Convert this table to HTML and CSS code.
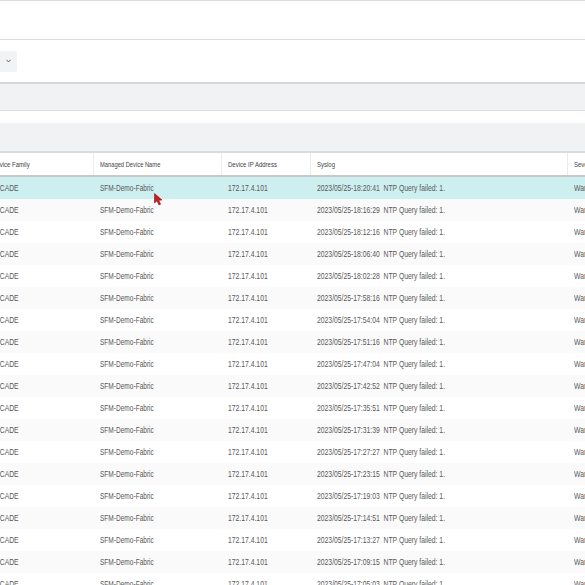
FILE: index.html
```html
<!DOCTYPE html>
<html>
<head>
<meta charset="utf-8">
<link rel="stylesheet" href="styles.css">
</head>
<body>
<div class="page">
  <div class="topbar"></div>
  <div class="toolbar">
    <div class="select-end">
      <svg width="5" height="4" viewBox="0 0 5 4"><path d="M0.5 0.8 L2.5 3 L4.5 0.8" fill="none" stroke="#666" stroke-width="1"/></svg>
    </div>
  </div>
  <div class="band band-1"></div>
  <div class="band band-2"></div>
  <div class="grid">
    <div class="row head">
      <div class="c c1"><span class="t">Device Family</span></div>
      <div class="c c2"><span class="t">Managed Device Name</span></div>
      <div class="c c3"><span class="t">Device IP Address</span></div>
      <div class="c c4"><span class="t">Syslog</span></div>
      <div class="c c5"><span class="t">Severity</span></div>
    </div>
    <div class="row sel"><div class="c c1"><span class="t">BROCADE</span></div><div class="c c2"><span class="t">SFM-Demo-Fabric</span></div><div class="c c3"><span class="t">172.17.4.101</span></div><div class="c c4"><span class="t">2023/05/25-18:20:41&nbsp; NTP Query failed: 1.</span></div><div class="c c5"><span class="t">Warning</span></div></div>
    <div class="row"><div class="c c1"><span class="t">BROCADE</span></div><div class="c c2"><span class="t">SFM-Demo-Fabric</span></div><div class="c c3"><span class="t">172.17.4.101</span></div><div class="c c4"><span class="t">2023/05/25-18:16:29&nbsp; NTP Query failed: 1.</span></div><div class="c c5"><span class="t">Warning</span></div></div>
    <div class="row"><div class="c c1"><span class="t">BROCADE</span></div><div class="c c2"><span class="t">SFM-Demo-Fabric</span></div><div class="c c3"><span class="t">172.17.4.101</span></div><div class="c c4"><span class="t">2023/05/25-18:12:16&nbsp; NTP Query failed: 1.</span></div><div class="c c5"><span class="t">Warning</span></div></div>
    <div class="row"><div class="c c1"><span class="t">BROCADE</span></div><div class="c c2"><span class="t">SFM-Demo-Fabric</span></div><div class="c c3"><span class="t">172.17.4.101</span></div><div class="c c4"><span class="t">2023/05/25-18:06:40&nbsp; NTP Query failed: 1.</span></div><div class="c c5"><span class="t">Warning</span></div></div>
    <div class="row"><div class="c c1"><span class="t">BROCADE</span></div><div class="c c2"><span class="t">SFM-Demo-Fabric</span></div><div class="c c3"><span class="t">172.17.4.101</span></div><div class="c c4"><span class="t">2023/05/25-18:02:28&nbsp; NTP Query failed: 1.</span></div><div class="c c5"><span class="t">Warning</span></div></div>
    <div class="row"><div class="c c1"><span class="t">BROCADE</span></div><div class="c c2"><span class="t">SFM-Demo-Fabric</span></div><div class="c c3"><span class="t">172.17.4.101</span></div><div class="c c4"><span class="t">2023/05/25-17:58:16&nbsp; NTP Query failed: 1.</span></div><div class="c c5"><span class="t">Warning</span></div></div>
    <div class="row"><div class="c c1"><span class="t">BROCADE</span></div><div class="c c2"><span class="t">SFM-Demo-Fabric</span></div><div class="c c3"><span class="t">172.17.4.101</span></div><div class="c c4"><span class="t">2023/05/25-17:54:04&nbsp; NTP Query failed: 1.</span></div><div class="c c5"><span class="t">Warning</span></div></div>
    <div class="row"><div class="c c1"><span class="t">BROCADE</span></div><div class="c c2"><span class="t">SFM-Demo-Fabric</span></div><div class="c c3"><span class="t">172.17.4.101</span></div><div class="c c4"><span class="t">2023/05/25-17:51:16&nbsp; NTP Query failed: 1.</span></div><div class="c c5"><span class="t">Warning</span></div></div>
    <div class="row"><div class="c c1"><span class="t">BROCADE</span></div><div class="c c2"><span class="t">SFM-Demo-Fabric</span></div><div class="c c3"><span class="t">172.17.4.101</span></div><div class="c c4"><span class="t">2023/05/25-17:47:04&nbsp; NTP Query failed: 1.</span></div><div class="c c5"><span class="t">Warning</span></div></div>
    <div class="row"><div class="c c1"><span class="t">BROCADE</span></div><div class="c c2"><span class="t">SFM-Demo-Fabric</span></div><div class="c c3"><span class="t">172.17.4.101</span></div><div class="c c4"><span class="t">2023/05/25-17:42:52&nbsp; NTP Query failed: 1.</span></div><div class="c c5"><span class="t">Warning</span></div></div>
    <div class="row"><div class="c c1"><span class="t">BROCADE</span></div><div class="c c2"><span class="t">SFM-Demo-Fabric</span></div><div class="c c3"><span class="t">172.17.4.101</span></div><div class="c c4"><span class="t">2023/05/25-17:35:51&nbsp; NTP Query failed: 1.</span></div><div class="c c5"><span class="t">Warning</span></div></div>
    <div class="row"><div class="c c1"><span class="t">BROCADE</span></div><div class="c c2"><span class="t">SFM-Demo-Fabric</span></div><div class="c c3"><span class="t">172.17.4.101</span></div><div class="c c4"><span class="t">2023/05/25-17:31:39&nbsp; NTP Query failed: 1.</span></div><div class="c c5"><span class="t">Warning</span></div></div>
    <div class="row"><div class="c c1"><span class="t">BROCADE</span></div><div class="c c2"><span class="t">SFM-Demo-Fabric</span></div><div class="c c3"><span class="t">172.17.4.101</span></div><div class="c c4"><span class="t">2023/05/25-17:27:27&nbsp; NTP Query failed: 1.</span></div><div class="c c5"><span class="t">Warning</span></div></div>
    <div class="row"><div class="c c1"><span class="t">BROCADE</span></div><div class="c c2"><span class="t">SFM-Demo-Fabric</span></div><div class="c c3"><span class="t">172.17.4.101</span></div><div class="c c4"><span class="t">2023/05/25-17:23:15&nbsp; NTP Query failed: 1.</span></div><div class="c c5"><span class="t">Warning</span></div></div>
    <div class="row"><div class="c c1"><span class="t">BROCADE</span></div><div class="c c2"><span class="t">SFM-Demo-Fabric</span></div><div class="c c3"><span class="t">172.17.4.101</span></div><div class="c c4"><span class="t">2023/05/25-17:19:03&nbsp; NTP Query failed: 1.</span></div><div class="c c5"><span class="t">Warning</span></div></div>
    <div class="row"><div class="c c1"><span class="t">BROCADE</span></div><div class="c c2"><span class="t">SFM-Demo-Fabric</span></div><div class="c c3"><span class="t">172.17.4.101</span></div><div class="c c4"><span class="t">2023/05/25-17:14:51&nbsp; NTP Query failed: 1.</span></div><div class="c c5"><span class="t">Warning</span></div></div>
    <div class="row"><div class="c c1"><span class="t">BROCADE</span></div><div class="c c2"><span class="t">SFM-Demo-Fabric</span></div><div class="c c3"><span class="t">172.17.4.101</span></div><div class="c c4"><span class="t">2023/05/25-17:13:27&nbsp; NTP Query failed: 1.</span></div><div class="c c5"><span class="t">Warning</span></div></div>
    <div class="row"><div class="c c1"><span class="t">BROCADE</span></div><div class="c c2"><span class="t">SFM-Demo-Fabric</span></div><div class="c c3"><span class="t">172.17.4.101</span></div><div class="c c4"><span class="t">2023/05/25-17:09:15&nbsp; NTP Query failed: 1.</span></div><div class="c c5"><span class="t">Warning</span></div></div>
    <div class="row"><div class="c c1"><span class="t">BROCADE</span></div><div class="c c2"><span class="t">SFM-Demo-Fabric</span></div><div class="c c3"><span class="t">172.17.4.101</span></div><div class="c c4"><span class="t">2023/05/25-17:05:03&nbsp; NTP Query failed: 1.</span></div><div class="c c5"><span class="t">Warning</span></div></div>
  </div>
  <svg class="cursor" width="9" height="13" viewBox="0 0 9 13"><path d="M0.5 0.5 L0.5 10 L3 7.8 L5 12 L6.6 11.2 L4.7 7.2 L8 7 Z" fill="#c81e1e" stroke="#8a1010" stroke-width="0.6"/></svg>
</div>
</body>
</html>
```

FILE: styles.css
```css
html, body {
  margin: 0;
  padding: 0;
  background: #ffffff;
  overflow: hidden;
}
.page {
  position: relative;
  width: 585px;
  height: 585px;
  overflow: hidden;
  font-family: "Liberation Sans", Arial, sans-serif;
  color: #585858;
}
.topbar {
  height: 38px;
  border-top: 1px solid #dcdcdc;
  border-bottom: 1px solid #dcdcdc;
}
.toolbar {
  height: 42px;
  display: flex;
  align-items: center;
  border-bottom: 2px solid #d8d8d8;
}
.select-end {
  width: 17px;
  height: 21px;
  background: #f2f3f5;
  border-radius: 0 2px 2px 0;
  display: flex;
  align-items: center;
  justify-content: center;
}
.band {
  background: #f1f2f4;
}
.band-1 {
  height: 26px;
  border-bottom: 1px solid #dedede;
  margin-bottom: 12px;
}
.band-2 {
  height: 28px;
  border-bottom: 2px solid #dadada;
}
.grid {
  margin-left: -21px;
  width: 640px;
}
.row {
  display: flex;
  height: 22px;
  align-items: center;
  font-size: 8.5px;
}
.row:nth-child(odd) {
  background: #fafafa;
}
.row.head {
  background: #fff;
  font-size: 7.5px;
  color: #444;
  border-bottom: 2px solid #c9c9c9;
  align-items: stretch;
}
.row.head .c {
  border-right: 1px solid #ececec;
  display: flex;
  align-items: center;
}
.row.head .c1 {
  padding-left: 13px;
}
.row.sel {
  background: #cdeff0;
}
.c {
  padding-left: 6px;
  white-space: nowrap;
  overflow: hidden;
  box-sizing: border-box;
}
.t {
  display: inline-block;
  transform: scaleX(0.8);
  transform-origin: left center;
}
.c2 .t {
  transform: scaleX(0.77);
}
.c1 { width: 115px; }
.c2 { width: 128px; }
.c3 { width: 89px; }
.c4 { width: 257px; }
.c5 { flex: 1; }
.cursor {
  position: absolute;
  left: 154px;
  top: 193px;
}
```
